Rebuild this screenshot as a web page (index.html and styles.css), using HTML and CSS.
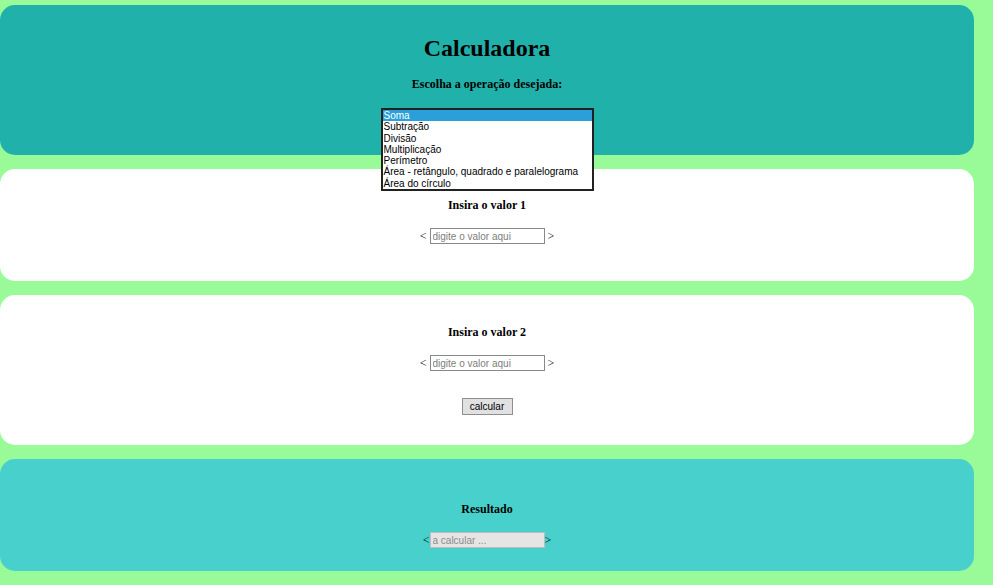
FILE: index.html
```html
<!DOCTYPE html>
<html lang="pt-BR">
<head>
<meta charset="utf-8">
<title>Calculadora</title>
<link rel="stylesheet" href="styles.css">
</head>
<body>
<section class="card card-top">
  <h1 class="title">Calculadora</h1>
  <p class="label label-op">Escolha a operação desejada:</p>
  <select class="ops" size="7">
    <option selected>Soma</option>
    <option>Subtração</option>
    <option>Divisão</option>
    <option>Multiplicação</option>
    <option>Perímetro</option>
    <option>Área - retângulo, quadrado e paralelograma</option>
    <option>Área do círculo</option>
  </select>
</section>
<section class="card card-v1">
  <p class="label">Insira o valor 1</p>
  <div class="row">
    <span class="br">&lt;</span>
    <input class="field" type="text" placeholder="digite o valor aqui">
    <span class="br">&gt;</span>
  </div>
</section>
<section class="card card-v2">
  <p class="label">Insira o valor 2</p>
  <div class="row">
    <span class="br">&lt;</span>
    <input class="field" type="text" placeholder="digite o valor aqui">
    <span class="br">&gt;</span>
  </div>
  <button class="btn" type="button">calcular</button>
</section>
<section class="card card-res">
  <p class="label">Resultado</p>
  <div class="row row-tight">
    <span class="br">&lt;</span>
    <input class="field field-out" type="text" placeholder="a calcular ..." disabled>
    <span class="br">&gt;</span>
  </div>
</section>
</body>
</html>
```

FILE: styles.css
```css
* { box-sizing: border-box; }
html, body { margin: 0; padding: 0; }
body {
  background: #98fb98;
  padding-top: 5px;
  font-family: "Liberation Serif", "Times New Roman", serif;
  color: #000;
}
.card {
  width: calc(100% - 19px);
  border-radius: 15px;
  margin-bottom: 14px;
  text-align: center;
  display: flex;
  flex-direction: column;
  align-items: center;
}
.card > * { flex-shrink: 0; }
.card-top { background: #20b2aa; height: 150px; padding-top: 30px; }
.card-v1 { background: #fff; height: 112px; padding-top: 29px; }
.card-v2 { background: #fff; height: 150px; padding-top: 30px; }
.card-res { background: #48d1cc; height: 112px; padding-top: 43px; }

.title {
  margin: 0;
  font-size: 24px;
  line-height: 27px;
  font-weight: bold;
}
.label {
  margin: 0;
  font-size: 12px;
  line-height: 14px;
  font-weight: bold;
}
.label-op { margin-top: 15px; }

.ops {
  margin-top: 17px;
  width: 213px;
  height: 83px;
  border: 2px solid #222;
  border-radius: 0;
  padding: 0;
  background: #fff;
  font-family: "Liberation Sans", Arial, sans-serif;
  font-size: 10px;
  overflow: hidden;
  outline: none;
  position: relative;
  z-index: 1;
}
.ops option {
  padding: 0 1px;
  line-height: 11.3px;
  min-height: 0;
  height: 11.3px;
  color: #000;
}
.ops option:checked {
  background: linear-gradient(#2a9fda, #2a9fda);
  color: #fff;
}

.row {
  display: flex;
  align-items: center;
  justify-content: center;
  gap: 3px;
  margin-top: 16px;
  height: 16px;
}
.row-tight { gap: 0; }
.br {
  font-family: "Liberation Serif", "Times New Roman", serif;
  font-size: 12px;
  line-height: 16px;
  color: #000;
}
.field {
  width: 115px;
  height: 16px;
  margin: 0;
  border: 1px solid #888;
  padding: 0 2px;
  font-family: "Liberation Sans", Arial, sans-serif;
  font-size: 10px;
  background: #fff;
  border-radius: 0;
}
.field::placeholder { color: #7d7d7d; }
.field-out {
  background: #e5e5e5;
  border-color: #bdbdbd;
}
.field-out::placeholder { color: #8c8c8c; }

.btn {
  margin-top: 27px;
  width: 51px;
  height: 17px;
  padding: 0;
  border: 1px solid #8f8f8f;
  border-radius: 0;
  background: #e1e1e1;
  font-family: "Liberation Sans", Arial, sans-serif;
  font-size: 10px;
  color: #000;
}
```
